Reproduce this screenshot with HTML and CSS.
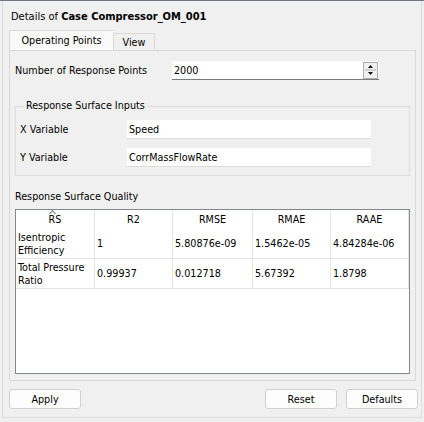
FILE: index.html
```html
<!DOCTYPE html>
<html lang="en">
  <head>
    <meta charset="UTF-8" />
    <title>Details</title>
    <link rel="stylesheet" href="styles.css">
  </head>
  <body>
    <div class="frame">
      <div class="title">Details of <b>Case Compressor_OM_001</b></div>

      <!-- Tabs -->
      <div class="tabs">
        <div class="tab active">Operating Points</div>
        <div class="tab">View</div>
      </div>

      <div class="pane">
        <div class="field-row top-row">
          <div class="label wide">Number of Response Points</div>
          <div class="spin">
            <span class="value">2000</span>
            <div class="arrows">
              <svg width="13" height="16" viewBox="0 0 13 16">
                <line x1="1" y1="8" x2="12" y2="8" stroke="#b4b4b4" />
                <path d="M4 6 L6.5 3 L9 6 Z" fill="#000" />
                <path d="M4 10 L6.5 13 L9 10 Z" fill="#000" />
              </svg>
            </div>
          </div>
        </div>

        <div class="group">
          <div class="legend">Response Surface Inputs</div>
          <div class="field-row">
            <div class="label">X Variable</div>
            <div class="input">Speed</div>
          </div>
          <div class="field-row">
            <div class="label">Y Variable</div>
            <div class="input">CorrMassFlowRate</div>
          </div>
        </div>

        <div class="section-label">Response Surface Quality</div>
        <div class="table-box">
          <table>
            <thead>
              <tr>
                <th class="sorted">RS</th>
                <th>R2</th>
                <th>RMSE</th>
                <th>RMAE</th>
                <th>RAAE</th>
              </tr>
            </thead>
            <tbody>
              <tr>
                <td>Isentropic<br>Efficiency</td>
                <td>1</td>
                <td>5.80876e-09</td>
                <td>1.5462e-05</td>
                <td>4.84284e-06</td>
              </tr>
              <tr>
                <td>Total Pressure<br>Ratio</td>
                <td>0.99937</td>
                <td>0.012718</td>
                <td>5.67392</td>
                <td>1.8798</td>
              </tr>
            </tbody>
          </table>
        </div>
      </div>

      <div class="buttons">
        <button>Apply</button>
        <div class="spacer"></div>
        <button>Reset</button>
        <button>Defaults</button>
      </div>
    </div>
  </body>
</html>
```

FILE: styles.css
```css
body {
  margin: 0;
  width: 424px;
  height: 422px;
  background-color: #f0f0f0;
  border-top: 1px solid #737880;
  box-sizing: border-box;
  font-family: "DejaVu Sans Condensed", "Liberation Sans", Arial, sans-serif;
  font-size: 10.7px;
  color: #000;
  overflow: hidden;
}

.frame {
  margin: 0 2px 0 2px;
  height: 417px;
  border: 1px solid #dcdcdc;
  border-top: none;
  box-sizing: border-box;
  padding: 0 3px 0 6px;
  display: flex;
  flex-direction: column;
}

.title {
  height: 29px;
  line-height: 32px;
  padding-left: 2px;
  font-size: 11px;
}

.tabs {
  display: flex;
  align-items: flex-end;
  height: 20px;
}

.tab {
  width: 42px;
  height: 17px;
  line-height: 17px;
  text-align: center;
  white-space: nowrap;
  border: 1px solid #d9d9d9;
  border-bottom: none;
  box-sizing: border-box;
  background-color: #f0f0f0;
}

.tab.active {
  width: 104px;
  height: 20px;
  line-height: 19px;
  background-color: #f9f9f9;
  border-right: none;
}

.pane {
  height: 331px;
  border: 1px solid #d9d9d9;
  box-sizing: border-box;
  padding: 10px 5px 0 5px;
  margin-right: 2px;
}

.field-row {
  display: flex;
  align-items: center;
  height: 28px;
}

.top-row {
  height: 19px;
}

.label {
  width: 107px;
  padding-left: 4px;
}

.label.wide {
  width: 157px;
  padding-left: 0;
}

.spin {
  display: flex;
  align-items: center;
  width: 207px;
  height: 19px;
  background-color: #fff;
  border-bottom: 1px solid #7a7a7a;
  box-sizing: border-box;
}

.spin .value {
  flex: 1;
  padding-left: 2px;
}

.arrows {
  width: 15px;
  height: 17px;
  margin-right: 1px;
  border: 1px solid #adadad;
  box-sizing: border-box;
  background-color: #f0f0f0;
  display: flex;
  align-items: center;
  justify-content: center;
}

.input {
  width: 244px;
  height: 19px;
  line-height: 19px;
  padding-left: 2px;
  background-color: #fff;
  border-bottom: 1px solid #dcdcdc;
  box-sizing: border-box;
}

.group {
  position: relative;
  margin-top: 26px;
  height: 70px;
  border: 1px solid #dcdcdc;
  box-sizing: border-box;
  padding-top: 8px;
}

.legend {
  position: absolute;
  top: -8px;
  left: 8px;
  padding: 0 2px;
  background-color: #f0f0f0;
}

.section-label {
  margin-top: 14px;
  height: 19px;
}

.table-box {
  height: 165px;
  border: 1px solid #828790;
  background-color: #fff;
  box-sizing: border-box;
}

table {
  border-collapse: collapse;
  table-layout: fixed;
  width: 393px;
}

th {
  position: relative;
  height: 19px;
  font-weight: normal;
  text-align: center;
  border-right: 1px solid #e5e5e5;
  padding: 0;
}

th:nth-child(1) { width: 78px; }
th:nth-child(2) { width: 77px; }
th:nth-child(3) { width: 79px; }
th:nth-child(4) { width: 77px; }

th.sorted::before {
  content: "";
  position: absolute;
  left: 34px;
  top: 1px;
  width: 4px;
  height: 4px;
  border-left: 1px solid #7a7a7a;
  border-top: 1px solid #7a7a7a;
  transform: rotate(45deg);
}

td {
  height: 29px;
  padding: 0 2px;
  line-height: 13px;
  border-right: 1px solid #e5e5e5;
  border-bottom: 1px solid #e5e5e5;
  white-space: nowrap;
}

.buttons {
  display: flex;
  gap: 9px;
  margin-top: 8px;
}

.spacer {
  flex: 1;
}

button {
  width: 72px;
  height: 20px;
  font-family: inherit;
  font-size: 10.7px;
  color: #000;
  background-color: #fdfdfd;
  border: 1px solid #d0d0d0;
  border-radius: 3px;
  padding: 0;
}
```
